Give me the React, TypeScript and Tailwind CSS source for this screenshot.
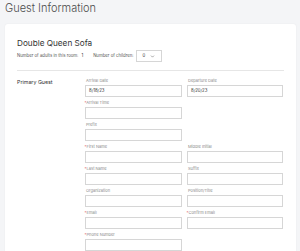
import { ChevronDown } from "lucide-react";

type FieldDef = { label: string; required?: boolean; value?: string } | null;

const rows: [FieldDef, FieldDef][] = [
  [{ label: "Arrival Date", value: "8/18/23" }, { label: "Departure Date", value: "8/20/23" }],
  [{ label: "Arrival Time", required: true }, null],
  [{ label: "Prefix" }, null],
  [{ label: "First Name", required: true }, { label: "Middle Initial" }],
  [{ label: "Last Name", required: true }, { label: "Suffix" }],
  [{ label: "Organization" }, { label: "Position/Title" }],
  [{ label: "Email", required: true }, { label: "Confirm Email", required: true }],
  [{ label: "Phone Number", required: true }, null],
];

function Field({ field }: { field: FieldDef }) {
  if (!field) return <div />;
  return (
    <div className="flex flex-col">
      <div className="h-[5px] leading-[5px] text-[4px] text-[#8a8a8a] pl-[1px] whitespace-nowrap">
        {field.required && <span className="text-[#d9534f] -ml-[1.5px]">*</span>}
        {field.label}
      </div>
      <div className="mt-[2px] h-[11.5px] border border-[#d6d6d6] bg-white flex items-center pl-[3px] text-[4.3px] text-[#333]">
        {field.value}
      </div>
    </div>
  );
}

export default function App() {
  return (
    <div className="w-[300px] h-[251px] overflow-hidden bg-[#f4f5f7] font-['Inter','Roboto',sans-serif]">
      <h1 className="pl-[5px] pt-[1.5px] h-[24px] text-[11px] leading-[13px] font-light text-[#4d4d4d]">
        Guest Information
      </h1>
      <div className="ml-[5px] w-[291px] h-[300px] rounded-[3px] bg-white shadow-[0_0_2px_rgba(0,0,0,0.06)] px-[12px] pt-[14px]">
        <h2 className="text-[8.2px] leading-[10px] text-[#333]">Double Queen Sofa</h2>
        <div className="mt-[2px] h-[12px] flex items-center text-[4.3px] text-[#555]">
          <span>Number of adults in this room:</span>
          <span className="ml-[3px] text-[#333]">1</span>
          <span className="ml-[10px]">Number of children:</span>
          <div className="ml-[2px] w-[26px] h-[11.5px] border border-[#d6d6d6] flex items-center justify-between px-[6px] text-[#333]">
            <span>0</span>
            <ChevronDown className="w-[5px] h-[5px]" strokeWidth={2} />
          </div>
        </div>
        <div className="mt-[8px] h-px bg-[#e6e6e6]" />
        <div className="flex pt-[7px]">
          <div className="w-[68px] text-[5.3px] leading-[8px] text-[#333]">Primary Guest</div>
          <div className="grid grid-cols-[97px_96px] gap-x-[5px] gap-y-[3.5px]">
            {rows.map((r, i) => (
              <div key={i} className="contents">
                <Field field={r[0]} />
                <Field field={r[1]} />
              </div>
            ))}
          </div>
        </div>
      </div>
    </div>
  );
}
